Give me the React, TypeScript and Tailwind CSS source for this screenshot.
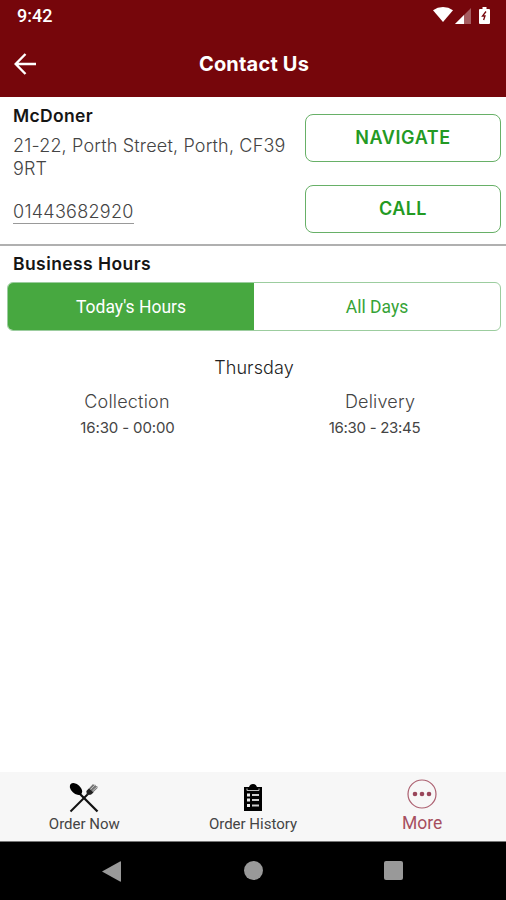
import { useState } from "react"

const hours = [
  { label: 'Collection', time: '16:30 - 00:00', timeClass: 'pl-[2px] tracking-[-0.13px]' },
  { label: 'Delivery', time: '16:30 - 23:45', timeClass: 'pr-[10px] tracking-[-0.3px]' },
]

function StatusBar() {
  return (
    <div className="flex h-8 items-center justify-between pl-[17px] pr-4">
      <span className="font-['Roboto',sans-serif] text-[18px] leading-8 font-medium text-white">9:42</span>
      <div className="flex items-center pb-[2px]">
        <svg width="20" height="16" viewBox="0 0 20 16" fill="#fff">
          <path d="M0 3.200Q4.500 0 10 0T20 3.200L10 15Z" />
        </svg>
        <svg className="mt-[1px] ml-[2px]" width="16" height="16" viewBox="0 0 16 16">
          <path d="M0 16L16 0V16Z" fill="#fff" opacity=".35" />
          <path d="M0 16L9 7V16Z" fill="#fff" />
        </svg>
        <svg className="ml-2" width="11" height="17" viewBox="0 0 11 17">
          <path d="M3.500 0H7.500V2H10A1 1 0 0 1 11 3V16A1 1 0 0 1 10 17H1A1 1 0 0 1 0 16V3A1 1 0 0 1 1 2H3.500Z" fill="#fff" />
          <path d="M7 4.500L3.500 9H6L4.600 13" stroke="#76060b" strokeWidth="1.300" fill="none" />
        </svg>
      </div>
    </div>
  )
}

function Header() {
  return (
    <header className="h-[97px] bg-[#76060b]">
      <StatusBar />
      <div className="grid h-[63px] grid-cols-[60px_1fr_60px] items-center">
        <button className="pl-[14px]">
          <svg width="23" height="22" viewBox="0 0 23 22" fill="none" stroke="#fff" strokeWidth="2.400">
            <path d="M22 11H2M11.500 1L1.700 11L11.500 21" />
          </svg>
        </button>
        <h1 className="pl-[2px] text-center text-[20px] leading-8 font-bold tracking-[0.2px] text-white">Contact Us</h1>
      </div>
    </header>
  )
}

function Contact() {
  return (
    <section className="flex h-[149px] justify-between border-b-2 border-[#b0b0b0] pr-[5px] pl-[13px]">
      <div className="w-[280px] pt-[7px]">
        <h2 className="text-[17.500px] leading-6 font-semibold tracking-[0.35px] text-[#151515]">McDoner</h2>
        <p className="mt-[6px] text-[18px] leading-[23px] font-light tracking-[0.17px] text-[#444]">21-22, Porth Street, Porth, CF39<br />9RT</p>
        <a className="mt-[21px] inline-block border-b border-[#999] text-[18px] leading-[22px] font-light tracking-[0.27px] text-[#444]">01443682920</a>
      </div>
      <div className="flex w-[196px] flex-col gap-[23px] pt-[17px]">
        <button className="h-12 rounded-lg border border-[#67b067] pb-[2px] text-[18px] font-semibold tracking-[0.6px] text-[#239a23]">NAVIGATE</button>
        <button className="h-12 rounded-lg border border-[#67b067] pb-[2px] text-[18px] font-semibold tracking-[0.4px] text-[#239a23]">CALL</button>
      </div>
    </section>
  )
}

function BusinessHours() {
  const [allDays, setAllDays] = useState<boolean>(false)

  return (
    <section className="flex-1">
      <h2 className="pt-[6px] pl-[13px] text-[17.500px] leading-6 font-semibold tracking-[0.43px] text-[#151515]">Business Hours</h2>
      <div className="mr-[5px] ml-[7px] mt-[6px] flex h-[49px] overflow-hidden rounded-md border border-[#9ccd9f] font-['Roboto',sans-serif] text-[17.500px]">
        <button
          className={allDays ? 'flex-1 pt-[2px] text-[#36a336]' : 'flex-1 bg-[#47a840] pt-[2px] text-white'}
          onClick={() => setAllDays(false)}>
          Today's Hours
        </button>
        <button
          className={allDays ? 'flex-1 bg-[#47a840] pt-[2px] text-white' : 'flex-1 pt-[2px] text-[#36a336]'}
          onClick={() => setAllDays(true)}>
          All Days
        </button>
      </div>
      <p className="mt-[25px] pl-[2px] text-center text-[18px] leading-6 font-light tracking-[0.1px] text-[#222]">Thursday</p>
      <div className="mt-[10px] grid grid-cols-2 text-center">
        {hours.map((item) => (
          <div key={item.label}>
            <p className="pl-[1px] text-[18px] leading-6 font-light tracking-[0.2px] text-[#444]">{item.label}</p>
            <p className={`mt-[2px] text-[15px] leading-6 text-[#444] ${item.timeClass}`}>{item.time}</p>
          </div>
        ))}
      </div>
    </section>
  )
}

function TabBar() {
  return (
    <nav className="grid h-[70px] grid-cols-3 border-b border-[#777] bg-[#f7f7f7] font-['Roboto',sans-serif] text-[15px] leading-5 text-[#444]">
      <div className="flex flex-col items-center pt-[11px]">
        <svg width="30" height="30" viewBox="0 0 30 30">
          <path d="M10 10L28.500 28.500" stroke="#111" strokeWidth="2.300" />
          <path d="M20 10L1.500 28.500" stroke="#111" strokeWidth="2" />
          <ellipse cx="7" cy="6" rx="7.200" ry="4.600" transform="rotate(43 7 6)" fill="#000" />
          <path d="M18 12L17.500 8L24 1L25 2L26 1.500L27 3L28.500 3.500L28.500 5L22 11.500Z" fill="#777" />
          <path d="M18 12L17.500 8L20 5.500L24.500 9.500L22 11.500Z" fill="#222" />
          <path d="M21.500 6.500L26 2M23.500 8L28 4" stroke="#ddd" strokeWidth=".7" />
        </svg>
        <span className="mt-[1px]">Order Now</span>
      </div>
      <div className="flex flex-col items-center pt-[12px]">
        <svg width="18" height="27" viewBox="0 0 18 27">
          <path d="M0 3H5Q6 0 9 0T13 3H18V27H0Z" fill="#000" />
          <path d="M3 4.500V6.500H15V4.500" stroke="#bbb" fill="none" />
          <path d="M3 11H6M3 16H6M3 21.500H6" stroke="#eee" strokeWidth="3" />
          <path d="M8 11H15M8 16H15M8 21.500H15" stroke="#ccc" strokeWidth="2" />
        </svg>
        <span className="mt-[3px]">Order History</span>
      </div>
      <div className="flex flex-col items-center pt-[7px] pl-[1px] text-[#a64f60]">
        <svg width="30" height="30" viewBox="0 0 30 30" fill="#99465a">
          <circle cx="15" cy="15" r="14" fill="none" stroke="#ac6070" strokeWidth="1.200" />
          <circle cx="8" cy="15" r="2.300" />
          <circle cx="15" cy="15" r="2.300" />
          <circle cx="22" cy="15" r="2.300" />
        </svg>
        <span className="mt-[4px] text-[17.500px] leading-5">More</span>
      </div>
    </nav>
  )
}

function AndroidNav() {
  return (
    <div className="flex h-[58px] justify-center bg-black pt-[19px] pr-[1px]">
      <svg className="mr-[123px]" width="19" height="21" viewBox="0 0 19 21">
        <path d="M0 10.500L18 .5Q19 0 19 1V20Q19 21 18 20.500Z" fill="#999" />
      </svg>
      <div className="size-[19px] rounded-full bg-[#999]" />
      <div className="ml-[121px] size-[19px] rounded-[2px] bg-[#999]" />
    </div>
  )
}

export default function App() {
  return (
    <div className="flex h-[900px] w-[506px] flex-col bg-white font-['Inter',sans-serif]">
      <Header />
      <Contact />
      <BusinessHours />
      <TabBar />
      <AndroidNav />
    </div>
  )
}
